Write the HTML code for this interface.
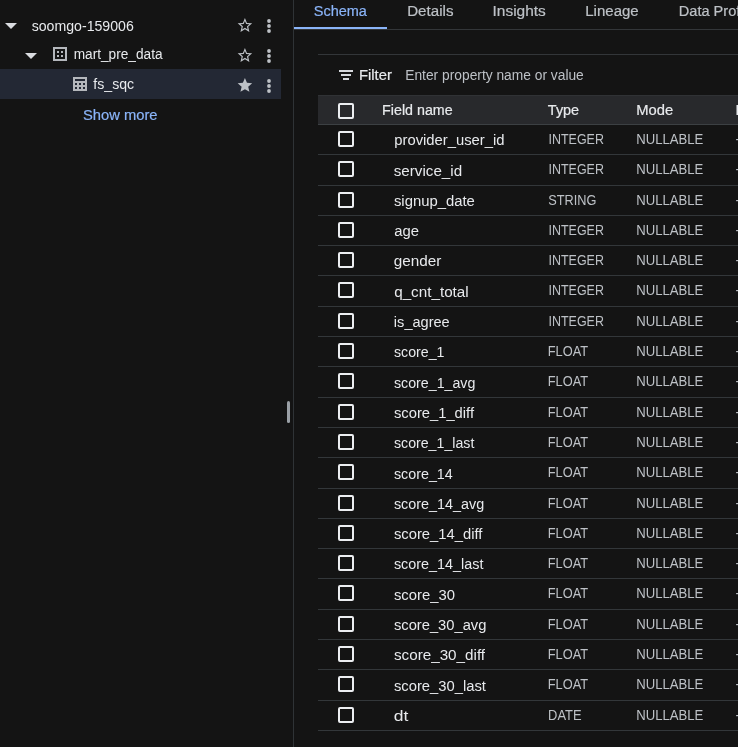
<!DOCTYPE html>
<html lang="en"><head><meta charset="utf-8"><title>BigQuery – fs_sqc schema</title>
<style>
html,body{margin:0;padding:0;background:#141414;}
body{width:738px;height:747px;position:relative;overflow:hidden;font-family:"Liberation Sans",Arial,sans-serif;font-size:14px;color:#e8eaed;}
#app{position:absolute;left:0;top:0;width:738px;height:747px;overflow:hidden;will-change:transform;}
.a{position:absolute;}
.t{position:absolute;white-space:nowrap;line-height:16px;height:16px;font-size:14px;font-weight:400;transform-origin:0 50%;}
.med{-webkit-text-stroke:0.2px currentColor;}
.ln{position:absolute;height:1px;}
.cb{position:absolute;left:338px;width:16px;height:16px;box-sizing:border-box;border:2px solid #eceef1;border-radius:2px;}
svg{position:absolute;display:block;overflow:visible;}

</style></head><body><div id="app">
<div id="left" class="a" style="left:0;top:0;width:293px;height:747px">
<div class="a" style="left:0;top:69px;width:281px;height:30px;background:#232834"></div>
<svg style="left:4px;top:22px" width="14" height="8" viewBox="0 0 14 8"><polygon points="1,1 13,1 7,7" fill="#dadce0"/></svg>
<svg style="left:24px;top:52px" width="14" height="8" viewBox="0 0 14 8"><polygon points="1,1 13,1 7,7" fill="#dadce0"/></svg>
<svg style="left:53px;top:47px" width="14" height="14" viewBox="0 0 14 14"><path fill="#b4b7bc" fill-rule="evenodd" d="M0 0h14v14H0zM2 2v10h10V2z"/><path fill="#b4b7bc" d="M4 4h2v2H4zM8 4h2v2H8zM4 8h2v2H4zM8 8h2v2H8z"/></svg>
<svg style="left:73px;top:77px" width="14" height="14" viewBox="0 0 14 14"><path fill="#b4b7bc" fill-rule="evenodd" d="M0 0h14v14H0zM2 2v2h10V2zM2 6v2h2V6zM6 6v2h2V6zM10 6v2h2V6zM2 10v2h2v-2zM6 10v2h2v-2zM10 10v2h2v-2z"/></svg>
<svg style="left:234px;top:13px" width="22" height="24" viewBox="0 0 22 24"><path fill="#bdc1c6" transform="translate(2.22 3.66) scale(0.725)" d="M22 9.24l-7.19-.62L12 2 9.19 8.63 2 9.24l5.46 4.73L5.82 21 12 17.27 18.18 21l-1.63-7.03L22 9.24zM12 15.4l-3.76 2.27 1-4.28-3.32-2.88 4.38-.38L12 6.1l1.71 4.04 4.38.38-3.32 2.88 1 4.28L12 15.4z"/></svg>
<svg style="left:234px;top:43px" width="22" height="24" viewBox="0 0 22 24"><path fill="#bdc1c6" transform="translate(2.22 3.66) scale(0.725)" d="M22 9.24l-7.19-.62L12 2 9.19 8.63 2 9.24l5.46 4.73L5.82 21 12 17.27 18.18 21l-1.63-7.03L22 9.24zM12 15.4l-3.76 2.27 1-4.28-3.32-2.88 4.38-.38L12 6.1l1.71 4.04 4.38.38-3.32 2.88 1 4.28L12 15.4z"/></svg>
<svg style="left:234px;top:72px" width="22" height="24" viewBox="0 0 22 24"><path fill="#bdc1c6" transform="translate(2.22 4.61) scale(0.725)" d="M12 17.27L18.18 21l-1.64-7.03L22 9.24l-7.19-.61L12 2 9.19 8.63 2 9.24l5.46 4.73L5.82 21z"/></svg>
<svg style="left:266px;top:18px" width="6" height="16" viewBox="0 0 6 16"><circle cx="3" cy="3" r="1.9" fill="#bdc1c6"/><circle cx="3" cy="8" r="1.9" fill="#bdc1c6"/><circle cx="3" cy="13" r="1.9" fill="#bdc1c6"/></svg>
<svg style="left:266px;top:48px" width="6" height="16" viewBox="0 0 6 16"><circle cx="3" cy="3" r="1.9" fill="#bdc1c6"/><circle cx="3" cy="8" r="1.9" fill="#bdc1c6"/><circle cx="3" cy="13" r="1.9" fill="#bdc1c6"/></svg>
<svg style="left:266px;top:78px" width="6" height="16" viewBox="0 0 6 16"><circle cx="3" cy="3" r="1.9" fill="#bdc1c6"/><circle cx="3" cy="8" r="1.9" fill="#bdc1c6"/><circle cx="3" cy="13" r="1.9" fill="#bdc1c6"/></svg>
<div class="a" style="left:287px;top:401px;width:3px;height:22px;border-radius:1.5px;background:#9aa0a6"></div>
</div>
<div class="a" style="left:293px;top:0;width:1px;height:747px;background:#2f3336"></div>
<div class="ln" style="left:294px;top:29px;width:444px;background:#333639"></div>
<div class="a" style="left:294px;top:27px;width:93px;height:2px;background:#8ab4f8"></div>
<div class="ln" style="left:318px;top:54px;width:420px;background:#333639"></div>
<svg style="left:339px;top:70px" width="14" height="10" viewBox="0 0 14 10"><path fill="#d6d9dd" d="M0 0h14v2H0zM2 4h10v2H2zM4 8h6v2H4z"/></svg>
<div class="a" style="left:318px;top:95px;width:420px;height:30px;background:#28292c;box-sizing:border-box;border-top:1px solid #303235;border-bottom:1px solid #3c4043"></div>
<div class="cb" style="top:103px"></div>
<div class="cb" style="top:131px"></div>
<div class="ln" style="left:318px;top:154px;width:420px;background:#33373a"></div>
<div class="cb" style="top:161px"></div>
<div class="ln" style="left:318px;top:185px;width:420px;background:#33373a"></div>
<div class="cb" style="top:192px"></div>
<div class="ln" style="left:318px;top:215px;width:420px;background:#33373a"></div>
<div class="cb" style="top:222px"></div>
<div class="ln" style="left:318px;top:245px;width:420px;background:#33373a"></div>
<div class="cb" style="top:252px"></div>
<div class="ln" style="left:318px;top:275px;width:420px;background:#33373a"></div>
<div class="cb" style="top:282px"></div>
<div class="ln" style="left:318px;top:306px;width:420px;background:#33373a"></div>
<div class="cb" style="top:313px"></div>
<div class="ln" style="left:318px;top:336px;width:420px;background:#33373a"></div>
<div class="cb" style="top:343px"></div>
<div class="ln" style="left:318px;top:366px;width:420px;background:#33373a"></div>
<div class="cb" style="top:373px"></div>
<div class="ln" style="left:318px;top:397px;width:420px;background:#33373a"></div>
<div class="cb" style="top:404px"></div>
<div class="ln" style="left:318px;top:427px;width:420px;background:#33373a"></div>
<div class="cb" style="top:434px"></div>
<div class="ln" style="left:318px;top:457px;width:420px;background:#33373a"></div>
<div class="cb" style="top:464px"></div>
<div class="ln" style="left:318px;top:488px;width:420px;background:#33373a"></div>
<div class="cb" style="top:495px"></div>
<div class="ln" style="left:318px;top:518px;width:420px;background:#33373a"></div>
<div class="cb" style="top:525px"></div>
<div class="ln" style="left:318px;top:548px;width:420px;background:#33373a"></div>
<div class="cb" style="top:555px"></div>
<div class="ln" style="left:318px;top:578px;width:420px;background:#33373a"></div>
<div class="cb" style="top:585px"></div>
<div class="ln" style="left:318px;top:609px;width:420px;background:#33373a"></div>
<div class="cb" style="top:616px"></div>
<div class="ln" style="left:318px;top:639px;width:420px;background:#33373a"></div>
<div class="cb" style="top:646px"></div>
<div class="ln" style="left:318px;top:669px;width:420px;background:#33373a"></div>
<div class="cb" style="top:676px"></div>
<div class="ln" style="left:318px;top:700px;width:420px;background:#33373a"></div>
<div class="cb" style="top:707px"></div>
<div class="ln" style="left:318px;top:730px;width:420px;background:#33373a"></div>
<div id="t_proj" class="t" style="left:31px;top:18px;color:#e8eaed;transform:translateX(0.70px) scaleX(1.0087);">soomgo-159006</div>
<div id="t_ds" class="t" style="left:73px;top:46px;color:#e8eaed;transform:translateX(0.68px) scaleX(0.9758);">mart_pre_data</div>
<div id="t_tbl" class="t" style="left:93px;top:76px;color:#e8eaed;transform:translateX(0.35px) scaleX(1.0088);">fs_sqc</div>
<div id="t_more" class="t med" style="left:83px;top:107px;color:#8ab4f8;transform:translateX(0.04px) scaleX(1.0518);">Show more</div>
<div id="tab0" class="t med" style="left:313px;top:3px;color:#8ab4f8;transform:translateX(0.75px) scaleX(1.0348);">Schema</div>
<div id="tab1" class="t med" style="left:407px;top:3px;color:#bdc1c6;transform:translateX(0.19px) scaleX(1.0810);">Details</div>
<div id="tab2" class="t med" style="left:492px;top:3px;color:#bdc1c6;transform:translateX(0.51px) scaleX(1.1041);">Insights</div>
<div id="tab3" class="t med" style="left:585px;top:3px;color:#bdc1c6;transform:translateX(0.26px) scaleX(1.0718);">Lineage</div>
<div id="tab4" class="t med" style="left:678px;top:3px;color:#bdc1c6;transform:translateX(0.74px) scaleX(1.0413);">Data Profile</div>
<div id="f_lbl" class="t med" style="left:359px;top:67px;color:#e8eaed;transform:translateX(0.02px) scaleX(1.0550);">Filter</div>
<div id="f_ph" class="t" style="left:405px;top:67px;color:#bdc1c6;transform:translateX(0.26px) scaleX(0.9846);">Enter property name or value</div>
<div id="h0" class="t med" style="left:382px;top:102px;color:#e8eaed;transform:translateX(0.11px) scaleX(1.0183);">Field name</div>
<div id="h1" class="t med" style="left:547px;top:102px;color:#e8eaed;transform:translateX(0.87px) scaleX(1.0295);">Type</div>
<div id="h2" class="t med" style="left:636px;top:102px;color:#e8eaed;transform:translateX(0.21px) scaleX(1.0539);">Mode</div>
<div id="h3" class="t med" style="left:735px;top:102px;color:#e8eaed;transform:translateX(0.60px) scaleX(1.0456);">Key</div>
<div id="r0n" class="t" style="left:394px;top:132px;color:#e8eaed;transform:translateX(0.23px) scaleX(1.0574);">provider_user_id</div>
<div id="r0t" class="t" style="left:548px;top:131px;color:#bdc1c6;transform:translateX(0.50px) scaleX(0.8906);">INTEGER</div>
<div id="r0m" class="t" style="left:636px;top:131px;color:#bdc1c6;transform:translateX(0.19px) scaleX(0.9380);">NULLABLE</div>
<div id="r0k" class="t" style="left:735.47px;top:131px;color:#bdc1c6;">-</div>
<div id="r1n" class="t" style="left:393px;top:163px;color:#e8eaed;transform:translateX(0.74px) scaleX(1.0845);">service_id</div>
<div id="r1t" class="t" style="left:548px;top:161px;color:#bdc1c6;transform:translateX(0.50px) scaleX(0.8906);">INTEGER</div>
<div id="r1m" class="t" style="left:636px;top:161px;color:#bdc1c6;transform:translateX(0.19px) scaleX(0.9380);">NULLABLE</div>
<div id="r1k" class="t" style="left:735.47px;top:161px;color:#bdc1c6;">-</div>
<div id="r2n" class="t" style="left:393px;top:193px;color:#e8eaed;transform:translateX(0.91px) scaleX(1.0609);">signup_date</div>
<div id="r2t" class="t" style="left:548px;top:192px;color:#bdc1c6;transform:translateX(0.19px) scaleX(0.9104);">STRING</div>
<div id="r2m" class="t" style="left:636px;top:192px;color:#bdc1c6;transform:translateX(0.19px) scaleX(0.9380);">NULLABLE</div>
<div id="r2k" class="t" style="left:735.47px;top:192px;color:#bdc1c6;">-</div>
<div id="r3n" class="t" style="left:394px;top:223px;color:#e8eaed;transform:translateX(0.17px) scaleX(1.0587);">age</div>
<div id="r3t" class="t" style="left:548px;top:222px;color:#bdc1c6;transform:translateX(0.50px) scaleX(0.8906);">INTEGER</div>
<div id="r3m" class="t" style="left:636px;top:222px;color:#bdc1c6;transform:translateX(0.19px) scaleX(0.9380);">NULLABLE</div>
<div id="r3k" class="t" style="left:735.47px;top:222px;color:#bdc1c6;">-</div>
<div id="r4n" class="t" style="left:393px;top:253px;color:#e8eaed;transform:translateX(0.84px) scaleX(1.0918);">gender</div>
<div id="r4t" class="t" style="left:548px;top:252px;color:#bdc1c6;transform:translateX(0.50px) scaleX(0.8906);">INTEGER</div>
<div id="r4m" class="t" style="left:636px;top:252px;color:#bdc1c6;transform:translateX(0.19px) scaleX(0.9380);">NULLABLE</div>
<div id="r4k" class="t" style="left:735.47px;top:252px;color:#bdc1c6;">-</div>
<div id="r5n" class="t" style="left:394px;top:284px;color:#e8eaed;transform:translateX(0.15px) scaleX(1.0886);">q_cnt_total</div>
<div id="r5t" class="t" style="left:548px;top:282px;color:#bdc1c6;transform:translateX(0.50px) scaleX(0.8906);">INTEGER</div>
<div id="r5m" class="t" style="left:636px;top:282px;color:#bdc1c6;transform:translateX(0.19px) scaleX(0.9380);">NULLABLE</div>
<div id="r5k" class="t" style="left:735.47px;top:282px;color:#bdc1c6;">-</div>
<div id="r6n" class="t" style="left:393px;top:314px;color:#e8eaed;transform:translateX(0.87px) scaleX(1.0395);">is_agree</div>
<div id="r6t" class="t" style="left:548px;top:313px;color:#bdc1c6;transform:translateX(0.50px) scaleX(0.8906);">INTEGER</div>
<div id="r6m" class="t" style="left:636px;top:313px;color:#bdc1c6;transform:translateX(0.19px) scaleX(0.9380);">NULLABLE</div>
<div id="r6k" class="t" style="left:735.47px;top:313px;color:#bdc1c6;">-</div>
<div id="r7n" class="t" style="left:393px;top:344px;color:#e8eaed;transform:translateX(0.96px) scaleX(1.0130);">score_1</div>
<div id="r7t" class="t" style="left:547px;top:343px;color:#bdc1c6;transform:translateX(0.68px) scaleX(0.9171);">FLOAT</div>
<div id="r7m" class="t" style="left:636px;top:343px;color:#bdc1c6;transform:translateX(0.19px) scaleX(0.9380);">NULLABLE</div>
<div id="r7k" class="t" style="left:735.47px;top:343px;color:#bdc1c6;">-</div>
<div id="r8n" class="t" style="left:393px;top:375px;color:#e8eaed;transform:translateX(0.93px) scaleX(1.0161);">score_1_avg</div>
<div id="r8t" class="t" style="left:547px;top:373px;color:#bdc1c6;transform:translateX(0.68px) scaleX(0.9171);">FLOAT</div>
<div id="r8m" class="t" style="left:636px;top:373px;color:#bdc1c6;transform:translateX(0.19px) scaleX(0.9380);">NULLABLE</div>
<div id="r8k" class="t" style="left:735.47px;top:373px;color:#bdc1c6;">-</div>
<div id="r9n" class="t" style="left:393px;top:405px;color:#e8eaed;transform:translateX(0.92px) scaleX(1.0539);">score_1_diff</div>
<div id="r9t" class="t" style="left:547px;top:404px;color:#bdc1c6;transform:translateX(0.68px) scaleX(0.9171);">FLOAT</div>
<div id="r9m" class="t" style="left:636px;top:404px;color:#bdc1c6;transform:translateX(0.19px) scaleX(0.9380);">NULLABLE</div>
<div id="r9k" class="t" style="left:735.47px;top:404px;color:#bdc1c6;">-</div>
<div id="r10n" class="t" style="left:393px;top:435px;color:#e8eaed;transform:translateX(0.96px) scaleX(1.0124);">score_1_last</div>
<div id="r10t" class="t" style="left:547px;top:434px;color:#bdc1c6;transform:translateX(0.68px) scaleX(0.9171);">FLOAT</div>
<div id="r10m" class="t" style="left:636px;top:434px;color:#bdc1c6;transform:translateX(0.19px) scaleX(0.9380);">NULLABLE</div>
<div id="r10k" class="t" style="left:735.47px;top:434px;color:#bdc1c6;">-</div>
<div id="r11n" class="t" style="left:393px;top:466px;color:#e8eaed;transform:translateX(0.89px) scaleX(1.0226);">score_14</div>
<div id="r11t" class="t" style="left:547px;top:464px;color:#bdc1c6;transform:translateX(0.68px) scaleX(0.9171);">FLOAT</div>
<div id="r11m" class="t" style="left:636px;top:464px;color:#bdc1c6;transform:translateX(0.19px) scaleX(0.9380);">NULLABLE</div>
<div id="r11k" class="t" style="left:735.47px;top:464px;color:#bdc1c6;">-</div>
<div id="r12n" class="t" style="left:393px;top:496px;color:#e8eaed;transform:translateX(0.88px) scaleX(1.0269);">score_14_avg</div>
<div id="r12t" class="t" style="left:547px;top:495px;color:#bdc1c6;transform:translateX(0.68px) scaleX(0.9171);">FLOAT</div>
<div id="r12m" class="t" style="left:636px;top:495px;color:#bdc1c6;transform:translateX(0.19px) scaleX(0.9380);">NULLABLE</div>
<div id="r12k" class="t" style="left:735.47px;top:495px;color:#bdc1c6;">-</div>
<div id="r13n" class="t" style="left:393px;top:526px;color:#e8eaed;transform:translateX(0.92px) scaleX(1.0561);">score_14_diff</div>
<div id="r13t" class="t" style="left:547px;top:525px;color:#bdc1c6;transform:translateX(0.68px) scaleX(0.9171);">FLOAT</div>
<div id="r13m" class="t" style="left:636px;top:525px;color:#bdc1c6;transform:translateX(0.19px) scaleX(0.9380);">NULLABLE</div>
<div id="r13k" class="t" style="left:735.47px;top:525px;color:#bdc1c6;">-</div>
<div id="r14n" class="t" style="left:393px;top:556px;color:#e8eaed;transform:translateX(0.88px) scaleX(1.0274);">score_14_last</div>
<div id="r14t" class="t" style="left:547px;top:555px;color:#bdc1c6;transform:translateX(0.68px) scaleX(0.9171);">FLOAT</div>
<div id="r14m" class="t" style="left:636px;top:555px;color:#bdc1c6;transform:translateX(0.19px) scaleX(0.9380);">NULLABLE</div>
<div id="r14k" class="t" style="left:735.47px;top:555px;color:#bdc1c6;">-</div>
<div id="r15n" class="t" style="left:393px;top:587px;color:#e8eaed;transform:translateX(0.92px) scaleX(1.0584);">score_30</div>
<div id="r15t" class="t" style="left:547px;top:585px;color:#bdc1c6;transform:translateX(0.68px) scaleX(0.9171);">FLOAT</div>
<div id="r15m" class="t" style="left:636px;top:585px;color:#bdc1c6;transform:translateX(0.19px) scaleX(0.9380);">NULLABLE</div>
<div id="r15k" class="t" style="left:735.47px;top:585px;color:#bdc1c6;">-</div>
<div id="r16n" class="t" style="left:393px;top:617px;color:#e8eaed;transform:translateX(0.92px) scaleX(1.0513);">score_30_avg</div>
<div id="r16t" class="t" style="left:547px;top:616px;color:#bdc1c6;transform:translateX(0.68px) scaleX(0.9171);">FLOAT</div>
<div id="r16m" class="t" style="left:636px;top:616px;color:#bdc1c6;transform:translateX(0.19px) scaleX(0.9380);">NULLABLE</div>
<div id="r16k" class="t" style="left:735.47px;top:616px;color:#bdc1c6;">-</div>
<div id="r17n" class="t" style="left:393px;top:647px;color:#e8eaed;transform:translateX(0.95px) scaleX(1.0876);">score_30_diff</div>
<div id="r17t" class="t" style="left:547px;top:646px;color:#bdc1c6;transform:translateX(0.68px) scaleX(0.9171);">FLOAT</div>
<div id="r17m" class="t" style="left:636px;top:646px;color:#bdc1c6;transform:translateX(0.19px) scaleX(0.9380);">NULLABLE</div>
<div id="r17k" class="t" style="left:735.47px;top:646px;color:#bdc1c6;">-</div>
<div id="r18n" class="t" style="left:393px;top:678px;color:#e8eaed;transform:translateX(0.92px) scaleX(1.0548);">score_30_last</div>
<div id="r18t" class="t" style="left:547px;top:676px;color:#bdc1c6;transform:translateX(0.68px) scaleX(0.9171);">FLOAT</div>
<div id="r18m" class="t" style="left:636px;top:676px;color:#bdc1c6;transform:translateX(0.19px) scaleX(0.9380);">NULLABLE</div>
<div id="r18k" class="t" style="left:735.47px;top:676px;color:#bdc1c6;">-</div>
<div id="r19n" class="t" style="left:393px;top:708px;color:#e8eaed;transform:translateX(0.77px) scaleX(1.2502);">dt</div>
<div id="r19t" class="t" style="left:548px;top:707px;color:#bdc1c6;transform:translateX(0.10px) scaleX(0.9223);">DATE</div>
<div id="r19m" class="t" style="left:636px;top:707px;color:#bdc1c6;transform:translateX(0.19px) scaleX(0.9380);">NULLABLE</div>
<div id="r19k" class="t" style="left:735.47px;top:707px;color:#bdc1c6;">-</div>
</div></body></html>
